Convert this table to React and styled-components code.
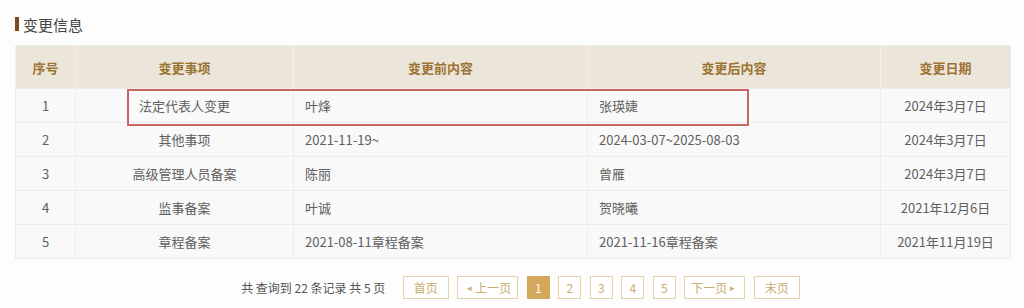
import React from "react";
import styled, { createGlobalStyle } from "styled-components";

const GlobalStyle = createGlobalStyle`
  html, body {
    margin: 0;
    padding: 0;
    background: #fdfdfd;
    font-family: "Noto Sans CJK SC", "Liberation Sans", sans-serif;
  }
`;

const Page = styled.div`
  width: 1024px;
  height: 308px;
  box-sizing: border-box;
  padding: 14px 14px 0 15px;
`;

const Title = styled.div`
  display: flex;
  align-items: center;
  height: 20px;
  font-size: 15px;
  color: #444;
  margin-bottom: 11px;

  &::before {
    content: "";
    width: 4px;
    height: 14px;
    margin-right: 4px;
    background-color: #7b4a1e;
  }
`;

const TableWrap = styled.div`
  position: relative;
`;

const Table = styled.table`
  width: 995px;
  border-collapse: collapse;
  table-layout: fixed;
  font-size: 13px;
  color: #606060;
  border: 1px solid #ebebeb;
`;

const Th = styled.th`
  height: 42px;
  padding: 0;
  background-color: #ece5da;
  color: #9b7434;
  font-weight: bold;
  text-align: center;
  border-left: 1px solid #f5f0e8;
`;

const Td = styled.td`
  height: 33px;
  padding: 0 0 0 ${(p) => p.$indent || 0}px;
  text-align: ${(p) => (p.$indent ? "left" : "center")};
  background-color: #f9f9f9;
  border: 1px solid #ededed;
  white-space: nowrap;
`;

const Marker = styled.div`
  position: absolute;
  left: 112px;
  top: 44px;
  width: 618px;
  height: 33px;
  border: 2px solid #c86663;
  pointer-events: none;
`;

const Pager = styled.div`
  display: flex;
  align-items: center;
  justify-content: center;
  gap: 8.5px;
  margin-top: 17px;
  padding-left: 16px;
`;

const Summary = styled.span`
  font-size: 12px;
  color: #555;
  margin-right: 9px;
`;

const PageButton = styled.span`
  display: inline-flex;
  align-items: center;
  justify-content: center;
  box-sizing: border-box;
  height: 23px;
  min-width: ${(p) => (p.$wide ? "60px" : p.$mid ? "46px" : "23px")};
  padding: 0 6px;
  font-size: 12px;
  border: 1px solid #e4d3a8;
  color: ${(p) => (p.$active ? "#fff" : "#c9ab6e")};
  background-color: ${(p) => (p.$active ? "#d4a85a" : "#fff")};
  border-color: ${(p) => (p.$active ? "#d4a85a" : "#e4d3a8")};
`;

const Arrow = styled.span`
  font-size: 9px;
  margin: 0 3px;
`;

const rows = [
  ["1", "法定代表人变更", "叶烽", "张瑛婕", "2024年3月7日"],
  ["2", "其他事项", "2021-11-19~", "2024-03-07~2025-08-03", "2024年3月7日"],
  ["3", "高级管理人员备案", "陈丽", "曾雁", "2024年3月7日"],
  ["4", "监事备案", "叶诚", "贺晓曦", "2021年12月6日"],
  ["5", "章程备案", "2021-08-11章程备案", "2021-11-16章程备案", "2021年11月19日"],
];

export default function App() {
  return (
    <Page>
      <GlobalStyle />
      <Title>变更信息</Title>
      <TableWrap>
        <Table>
          <colgroup>
            <col style={{ width: 60 }} />
            <col style={{ width: 218 }} />
            <col style={{ width: 294 }} />
            <col style={{ width: 293 }} />
            <col style={{ width: 130 }} />
          </colgroup>
          <thead>
            <tr>
              <Th>序号</Th>
              <Th>变更事项</Th>
              <Th>变更前内容</Th>
              <Th>变更后内容</Th>
              <Th>变更日期</Th>
            </tr>
          </thead>
          <tbody>
            {rows.map((r, i) => (
              <tr key={r[0]}>
                <Td>{r[0]}</Td>
                <Td $indent={i === 0 ? 63 : 0}>{r[1]}</Td>
                <Td $indent={11}>{r[2]}</Td>
                <Td $indent={11}>{r[3]}</Td>
                <Td>{r[4]}</Td>
              </tr>
            ))}
          </tbody>
        </Table>
        <Marker />
      </TableWrap>
      <Pager>
        <Summary>共 查询到 22 条记录 共 5 页</Summary>
        <PageButton $mid>首页</PageButton>
        <PageButton $wide>
          <Arrow>◂</Arrow>上一页
        </PageButton>
        <PageButton $active>1</PageButton>
        <PageButton>2</PageButton>
        <PageButton>3</PageButton>
        <PageButton>4</PageButton>
        <PageButton>5</PageButton>
        <PageButton $wide>
          下一页<Arrow>▸</Arrow>
        </PageButton>
        <PageButton $mid>末页</PageButton>
      </Pager>
    </Page>
  );
}
